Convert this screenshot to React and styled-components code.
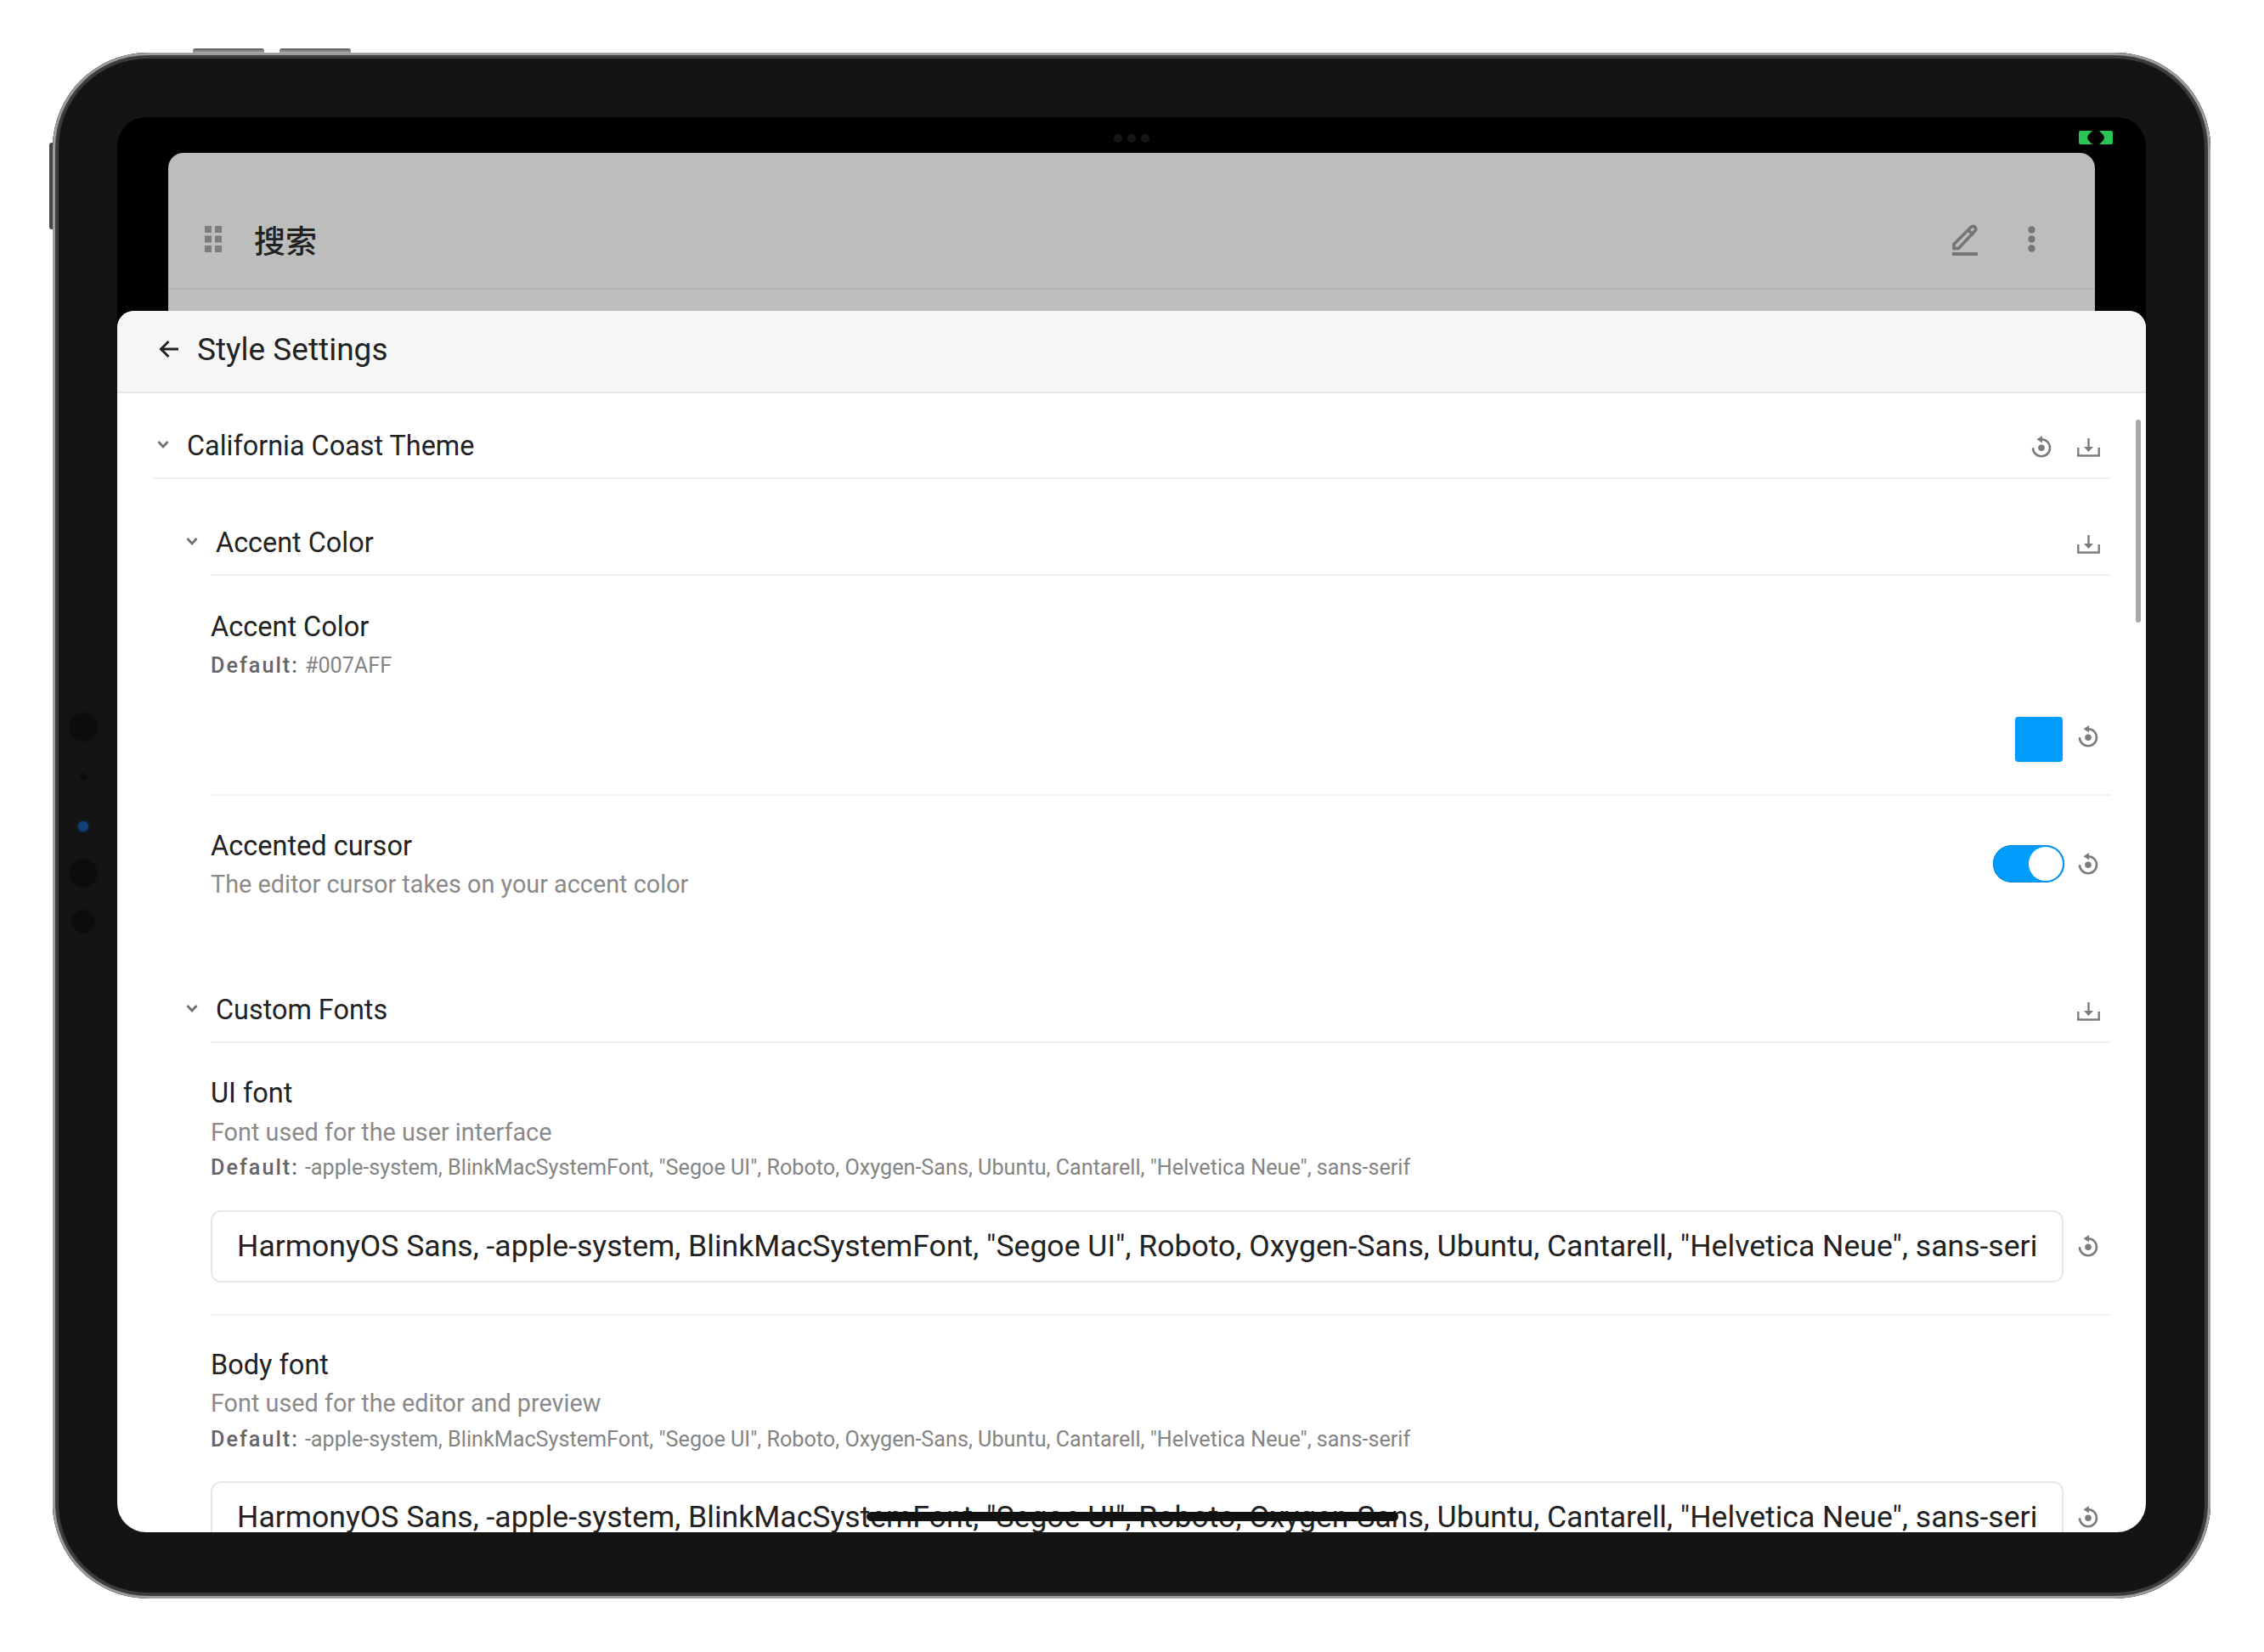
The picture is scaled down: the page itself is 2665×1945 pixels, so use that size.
import React from "react";
import styled, { createGlobalStyle } from "styled-components";

const FONT = `Roboto, "Noto Sans CJK SC", sans-serif`;

const GlobalStyle = createGlobalStyle`
  html, body {
    margin: 0;
    background: #fff;
  }
  body {
    width: 2665px;
    height: 1945px;
    overflow: hidden;
    font-family: ${FONT};
  }
`;

const Page = styled.div`
  padding: 62px 0 0 62px;
`;

const Device = styled.div`
  position: relative;
  width: 2540px;
  height: 1820px;
  box-sizing: border-box;
  padding: 76px 76px 78px;
  display: flex;
  border-radius: 112px;
  background: #141414;
  box-shadow: inset 0 0 0 3px #9c9c9c, inset 0 0 0 7px #3c3c3c;
`;

const TopButton = styled.div`
  position: absolute;
  top: -5px;
  left: ${(p) => p.$left}px;
  width: 84px;
  height: 5px;
  border-radius: 3px 3px 0 0;
  background: linear-gradient(#555, #aaa);
`;

const SideButton = styled.div`
  position: absolute;
  left: -4px;
  top: 106px;
  width: 4px;
  height: 102px;
  border-radius: 3px 0 0 3px;
  background: #444;
`;

const Lens = styled.div`
  position: absolute;
  left: 36px;
  top: ${(p) => p.$top}px;
  width: ${(p) => p.$size}px;
  height: ${(p) => p.$size}px;
  margin-left: ${(p) => -p.$size / 2}px;
  margin-top: ${(p) => -p.$size / 2}px;
  border-radius: 50%;
  background: ${(p) => p.$color || "#0c0c0c"};
  box-shadow: 0 0 3px ${(p) => p.$color || "#0c0c0c"};
`;

const Screen = styled.div`
  position: relative;
  flex: 1;
  display: flex;
  flex-direction: column;
  padding-top: 42px;
  border-radius: 34px;
  overflow: hidden;
  background: #000;
`;

const SpeakerDots = styled.div`
  position: absolute;
  top: 20px;
  left: 1173px;
  display: flex;
  gap: 6px;
  & > span {
    width: 10px;
    height: 10px;
    border-radius: 50%;
    background: #161616;
  }
`;

const CameraBadge = styled.svg`
  position: absolute;
  top: 16px;
  right: 39px;
  width: 40px;
  height: 16px;
`;

const Backdrop = styled.div`
  height: 186px;
  flex: none;
  margin: 0 60px;
  box-sizing: border-box;
  border-radius: 18px 18px 0 0;
  background: #bdbdbd;
`;

const BackdropBar = styled.div`
  height: 161px;
  box-sizing: border-box;
  display: flex;
  align-items: center;
  border-bottom: 2px solid #b2b2b2;
  padding: 44px 70px 0 43px;
`;

const BackdropTitle = styled.span`
  margin-left: 38px;
  font-size: 37px;
  font-weight: 500;
  color: #222;
  flex: 1;
`;

const Sheet = styled.div`
  flex: 1;
  min-height: 0;
  display: flex;
  flex-direction: column;
  border-radius: 20px 20px 0 0;
  background: #fff;
  overflow: hidden;
`;

const SheetHeader = styled.div`
  flex: none;
  height: 97px;
  box-sizing: border-box;
  display: flex;
  align-items: center;
  gap: 21px;
  padding: 0 0 5px 49px;
  background: #f6f6f6;
  border-bottom: 2px solid #e9e9e9;
  font-size: 37px;
  color: #222;
`;

const Body = styled.div`
  padding: 0 41px 0 42px;
`;

const Heading = styled.div`
  display: flex;
  align-items: center;
  box-sizing: border-box;
  height: ${(p) => p.$height}px;
  padding: ${(p) => p.$top}px 13px 0 0;
  margin-left: ${(p) => p.$indent}px;
  border-bottom: 2px solid #f1f1f1;
`;

const Chevron = styled.svg`
  width: 14px;
  height: 10px;
  flex: none;
  margin: -4px 21px 0 ${(p) => p.$offset}px;
`;

const HeadingText = styled.span`
  flex: 1;
  font-size: 32.4px;
  color: #222;
`;

const HeadingIcons = styled.div`
  display: flex;
  align-items: center;
  gap: 30px;
  margin-top: 3px;
`;

const Item = styled.div`
  margin-left: 68px;
  padding: ${(p) => p.$top}px 0 ${(p) => p.$bottom}px;
  border-bottom: ${(p) => (p.$line ? "2px solid #f1f1f1" : "none")};
`;

const ItemRow = styled.div`
  display: flex;
  justify-content: space-between;
  align-items: flex-start;
`;

const ItemTitle = styled.div`
  font-size: 32.5px;
  line-height: 40px;
  color: #222;
`;

const ItemDesc = styled.div`
  margin-top: ${(p) => p.$top}px;
  font-size: 28.8px;
  line-height: 34px;
  color: #8a8a8a;
`;

const DefaultLine = styled.div`
  margin-top: ${(p) => p.$top}px;
  font-size: 25.2px;
  line-height: 34px;
  color: #848484;
  & > b {
    font-weight: 500;
    color: #666;
    letter-spacing: 2px;
    margin-right: 7px;
  }
`;

const Control = styled.div`
  display: flex;
  align-items: center;
  justify-content: flex-end;
  gap: 18px;
  padding-right: 15px;
  margin-top: ${(p) => p.$top}px;
`;

const Swatch = styled.div`
  width: 56px;
  height: 53px;
  border-radius: 4px;
  background: #009dff;
  box-shadow: 0 0 4px rgba(0, 0, 0, 0.12);
`;

const ResetSlot = styled.div`
  display: flex;
  margin-top: -6px;
`;

const Toggle = styled.div`
  width: 84px;
  height: 44px;
  margin-right: -2px;
  border-radius: 22px;
  background: #009dff;
  display: flex;
  justify-content: flex-end;
  padding: 2px;
  box-sizing: border-box;
  box-shadow: inset 0 0 0 1px #0a84d6;
`;

const ToggleThumb = styled.div`
  width: 40px;
  height: 40px;
  border-radius: 50%;
  background: #fff;
`;

const InputRow = styled.div`
  display: flex;
  align-items: center;
  gap: 17px;
  padding-right: 15px;
  margin-top: ${(p) => p.$top}px;
`;

const FontInput = styled.input`
  flex: 1;
  min-width: 0;
  height: 85px;
  box-sizing: border-box;
  padding: 0 29px 2px;
  border: 2px solid #e7e7e7;
  border-radius: 12px;
  background: #fff;
  font-family: ${FONT};
  font-size: 35.6px;
  color: #222;
  outline: none;
`;

const Scrollbar = styled.div`
  position: absolute;
  top: 356px;
  right: 6px;
  width: 6px;
  height: 239px;
  border-radius: 3px;
  background: #a8a8a8;
`;

const HomeBar = styled.div`
  position: absolute;
  left: 882px;
  top: 1642px;
  width: 626px;
  height: 11px;
  border-radius: 6px;
  background: #111;
`;

const ResetIcon = () => (
  <svg width="24" height="27" viewBox="0 0 24 27" fill="none">
    <path d="M12 4.2a10 10 0 1 1-10 10" stroke="#7c7c7c" strokeWidth="2.6" />
    <path d="M13 0 6.5 4.2 13 8.5z" fill="#7c7c7c" />
    <circle cx="12" cy="14.2" r="3.8" fill="#7c7c7c" />
  </svg>
);

const DownloadIcon = () => (
  <svg width="27" height="22" viewBox="0 0 27 22" fill="none">
    <path d="M1.3 11v9.5h24.4V11" stroke="#7c7c7c" strokeWidth="2.4" />
    <path d="M13.5 0v12" stroke="#7c7c7c" strokeWidth="2.4" />
    <path d="M8 10h11l-5.5 6z" fill="#7c7c7c" />
  </svg>
);

const ChevronIcon = ({ offset }) => (
  <Chevron $offset={offset} viewBox="0 0 14 10" fill="none">
    <path d="M1.5 2 7 8l5.5-6" stroke="#707070" strokeWidth="2.8" />
  </Chevron>
);

const BackArrow = () => (
  <svg width="24" height="22" viewBox="0 0 24 22" fill="none">
    <path d="M23 11H3M11.5 2 2.5 11l9 9" stroke="#222" strokeWidth="3" />
  </svg>
);

const GripIcon = () => (
  <svg width="20" height="31" viewBox="0 0 20 31" fill="#7d7d7d">
    <rect x="0" y="0" width="8" height="8" />
    <rect x="12" y="0" width="8" height="8" />
    <rect x="0" y="11.5" width="8" height="8" />
    <rect x="12" y="11.5" width="8" height="8" />
    <rect x="0" y="23" width="8" height="8" />
    <rect x="12" y="23" width="8" height="8" />
  </svg>
);

const PenIcon = () => (
  <svg width="32" height="38" viewBox="0 0 32 38" fill="none">
    <path d="M3 24.5 23 4.5c1.5-1.5 3.5-1.5 4.8-.2s1.3 3.3-.2 4.8L8.5 29.5H3z" stroke="#757575" strokeWidth="3.6" />
    <path d="M20 8l6 6" stroke="#757575" strokeWidth="3.6" />
    <path d="M1 36h30" stroke="#757575" strokeWidth="4" />
  </svg>
);

const MoreIcon = () => (
  <svg width="9" height="31" viewBox="0 0 9 31" fill="#757575" style={{ marginLeft: 58 }}>
    <circle cx="4.5" cy="4.5" r="4.2" />
    <circle cx="4.5" cy="15.5" r="4.2" />
    <circle cx="4.5" cy="26.5" r="4.2" />
  </svg>
);

const SectionHeading = ({ height, top, indent, offset, children, withReset }) => (
  <Heading $height={height} $top={top} $indent={indent}>
    <ChevronIcon offset={offset} />
    <HeadingText>{children}</HeadingText>
    <HeadingIcons>
      {withReset && <ResetIcon />}
      <DownloadIcon />
    </HeadingIcons>
  </Heading>
);

const FALLBACK =
  '-apple-system, BlinkMacSystemFont, "Segoe UI", Roboto, Oxygen-Sans, Ubuntu, Cantarell, "Helvetica Neue", sans-serif';

const FontSetting = ({ title, desc, top, gaps, bottom, line }) => (
  <Item $top={top} $bottom={bottom} $line={line}>
    <ItemTitle>{title}</ItemTitle>
    <ItemDesc $top={gaps[0]}>{desc}</ItemDesc>
    <DefaultLine $top={gaps[1]}>
      <b>Default:</b>
      {FALLBACK}
    </DefaultLine>
    <InputRow $top={gaps[2]}>
      <FontInput readOnly value={`HarmonyOS Sans, ${FALLBACK}`} />
      <ResetIcon />
    </InputRow>
  </Item>
);

export default function App() {
  return (
    <>
      <GlobalStyle />
      <Page>
        <Device>
          <TopButton $left={165} />
          <TopButton $left={267} />
          <SideButton />
          <Lens $top={794} $size={32} />
          <Lens $top={852} $size={8} />
          <Lens $top={911} $size={12} $color="#123f78" />
          <Lens $top={966} $size={32} />
          <Lens $top={1023} $size={26} />
          <Screen>
            <SpeakerDots>
              <span />
              <span />
              <span />
            </SpeakerDots>
            <CameraBadge viewBox="0 0 40 16">
              <path d="M2 0h14l-5 5-1 3 1 3 5 5H2a2 2 0 0 1-2-2V2a2 2 0 0 1 2-2z" fill="#2ac455" />
              <path d="M38 0H24l5 5 1 3-1 3-5 5h14a2 2 0 0 0 2-2V2a2 2 0 0 0-2-2z" fill="#2ac455" />
            </CameraBadge>
            <Backdrop>
              <BackdropBar>
                <GripIcon />
                <BackdropTitle>搜索</BackdropTitle>
                <PenIcon />
                <MoreIcon />
              </BackdropBar>
            </Backdrop>
            <Sheet>
              <SheetHeader>
                <BackArrow />
                Style Settings
              </SheetHeader>
              <Body>
                <SectionHeading height={101} top={25} indent={0} offset={5} withReset>
                  California Coast Theme
                </SectionHeading>
                <SectionHeading height={114} top={38} indent={68} offset={-29}>
                  Accent Color
                </SectionHeading>
                <Item $top={40} $bottom={38} $line>
                  <ItemTitle>Accent Color</ItemTitle>
                  <DefaultLine $top={9}>
                    <b>Default:</b>#007AFF
                  </DefaultLine>
                  <Control $top={43}>
                    <Swatch />
                    <ResetSlot>
                      <ResetIcon />
                    </ResetSlot>
                  </Control>
                </Item>
                <Item $top={39} $bottom={56}>
                  <ItemRow>
                    <div>
                      <ItemTitle>Accented cursor</ItemTitle>
                      <ItemDesc $top={8}>The editor cursor takes on your accent color</ItemDesc>
                    </div>
                    <Control $top={19}>
                      <Toggle>
                        <ToggleThumb />
                      </Toggle>
                      <ResetIcon />
                    </Control>
                  </ItemRow>
                </Item>
                <SectionHeading height={114} top={38} indent={68} offset={-29}>
                  Custom Fonts
                </SectionHeading>
                <FontSetting
                  title="UI font"
                  desc="Font used for the user interface"
                  top={39}
                  gaps={[9, 8, 33]}
                  bottom={37}
                  line
                />
                <FontSetting
                  title="Body font"
                  desc="Font used for the editor and preview"
                  top={38}
                  gaps={[8, 9, 32]}
                  bottom={20}
                />
              </Body>
            </Sheet>
            <Scrollbar />
            <HomeBar />
          </Screen>
        </Device>
      </Page>
    </>
  );
}
